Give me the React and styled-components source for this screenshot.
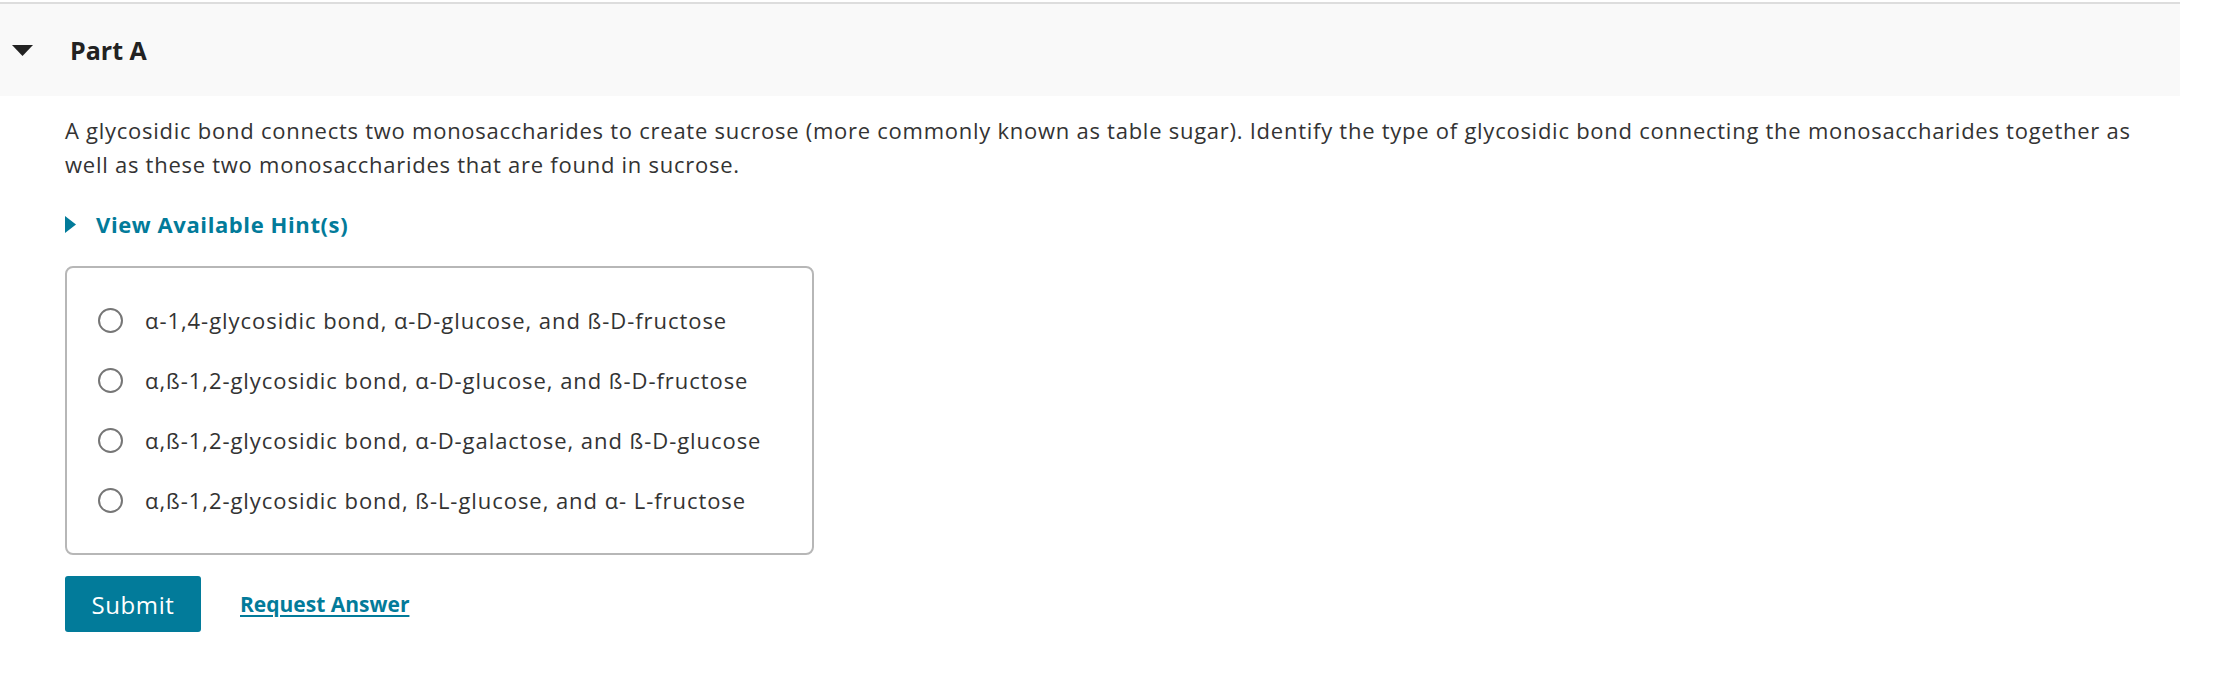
import React, { useState } from "react";
import styled, { createGlobalStyle } from "styled-components";

const Global = createGlobalStyle`
  html, body { margin: 0; padding: 0; background: #fff; }
  body { font-family: "Open Sans", "Noto Sans", Arial, sans-serif; color: #333; }
`;

const Page = styled.div`
  width: 2180px;
  padding-top: 2px;
`;

const Header = styled.div`
  display: flex;
  align-items: center;
  gap: 37px;
  height: 92px;
  padding-left: 12px;
  border-top: 2px solid #dddddd;
  background: #f9f9f9;
`;

const Title = styled.h2`
  margin: 0;
  font-size: 25px;
  font-weight: 700;
  color: #222;
  line-height: 1;
`;

const Body = styled.div`
  padding: 17px 0 0 65px;
`;

const Prompt = styled.p`
  margin: 0;
  font-size: 22px;
  letter-spacing: 0.74px;
  line-height: 34px;
  color: #333;
`;

const HintToggle = styled.button`
  display: flex;
  align-items: center;
  gap: 20px;
  margin: 29px 0 0 0;
  padding: 0;
  border: 0;
  background: none;
  font-family: inherit;
  font-size: 22px;
  letter-spacing: 0.6px;
  font-weight: 700;
  line-height: 28px;
  color: #027b9a;
  cursor: pointer;
`;

const Choices = styled.div`
  box-sizing: border-box;
  margin-top: 28px;
  width: 749px;
  border: 2px solid #b7b7b7;
  border-radius: 8px;
  padding: 22px 0 23px 31px;
`;

const ChoiceRow = styled.label`
  display: flex;
  align-items: center;
  gap: 22px;
  height: 60px;
  font-size: 22px;
  letter-spacing: 0.95px;
  color: #333;
  cursor: pointer;
`;

const Radio = styled.span`
  flex: none;
  box-sizing: border-box;
  width: 25px;
  height: 25px;
  border-radius: 50%;
  border: 2px solid ${(p) => (p.$checked ? "#027b9a" : "#767676")};
  background: ${(p) => (p.$checked ? "radial-gradient(circle, #027b9a 45%, #fff 48%)" : "#fff")};
`;

const Actions = styled.div`
  display: flex;
  align-items: center;
  gap: 39px;
  margin-top: 21px;
`;

const SubmitButton = styled.button`
  width: 136px;
  height: 56px;
  border: 0;
  border-radius: 3px;
  background: #027b9a;
  color: #fff;
  font-family: inherit;
  font-size: 24px;
  letter-spacing: 0.6px;
  font-weight: 400;
  cursor: pointer;
`;

const LinkButton = styled.a`
  font-size: 21px;
  font-weight: 700;
  color: #027b9a;
  text-decoration: underline;
  text-underline-offset: 3px;
  text-decoration-thickness: 2px;
  cursor: pointer;
`;

const options = [
  "α-1,4-glycosidic bond, α-D-glucose, and ß-D-fructose",
  "α,ß-1,2-glycosidic bond, α-D-glucose, and ß-D-fructose",
  "α,ß-1,2-glycosidic bond, α-D-galactose, and ß-D-glucose",
  "α,ß-1,2-glycosidic bond, ß-L-glucose, and α- L-fructose",
];

export default function App() {
  const [sel, setSel] = useState(null);
  return (
    <Page>
      <Global />
      <Header>
        <svg width="21" height="11" viewBox="0 0 21 11">
          <polygon points="0,0 21,0 10.5,11" fill="#222" />
        </svg>
        <Title>Part A</Title>
      </Header>
      <Body>
        <Prompt>
          A glycosidic bond connects two monosaccharides to create sucrose (more commonly known as table sugar). Identify the type of glycosidic bond connecting the monosaccharides together as well as these two monosaccharides that are found in sucrose.
        </Prompt>
        <HintToggle>
          <svg width="11" height="17" viewBox="0 0 11 17">
            <polygon points="0,0 11,8.5 0,17" fill="#027b9a" />
          </svg>
          View Available Hint(s)
        </HintToggle>
        <Choices>
          {options.map((o, i) => (
            <ChoiceRow key={i} onClick={() => setSel(i)}>
              <Radio $checked={sel === i} />
              {o}
            </ChoiceRow>
          ))}
        </Choices>
        <Actions>
          <SubmitButton>Submit</SubmitButton>
          <LinkButton>Request Answer</LinkButton>
        </Actions>
      </Body>
    </Page>
  );
}
